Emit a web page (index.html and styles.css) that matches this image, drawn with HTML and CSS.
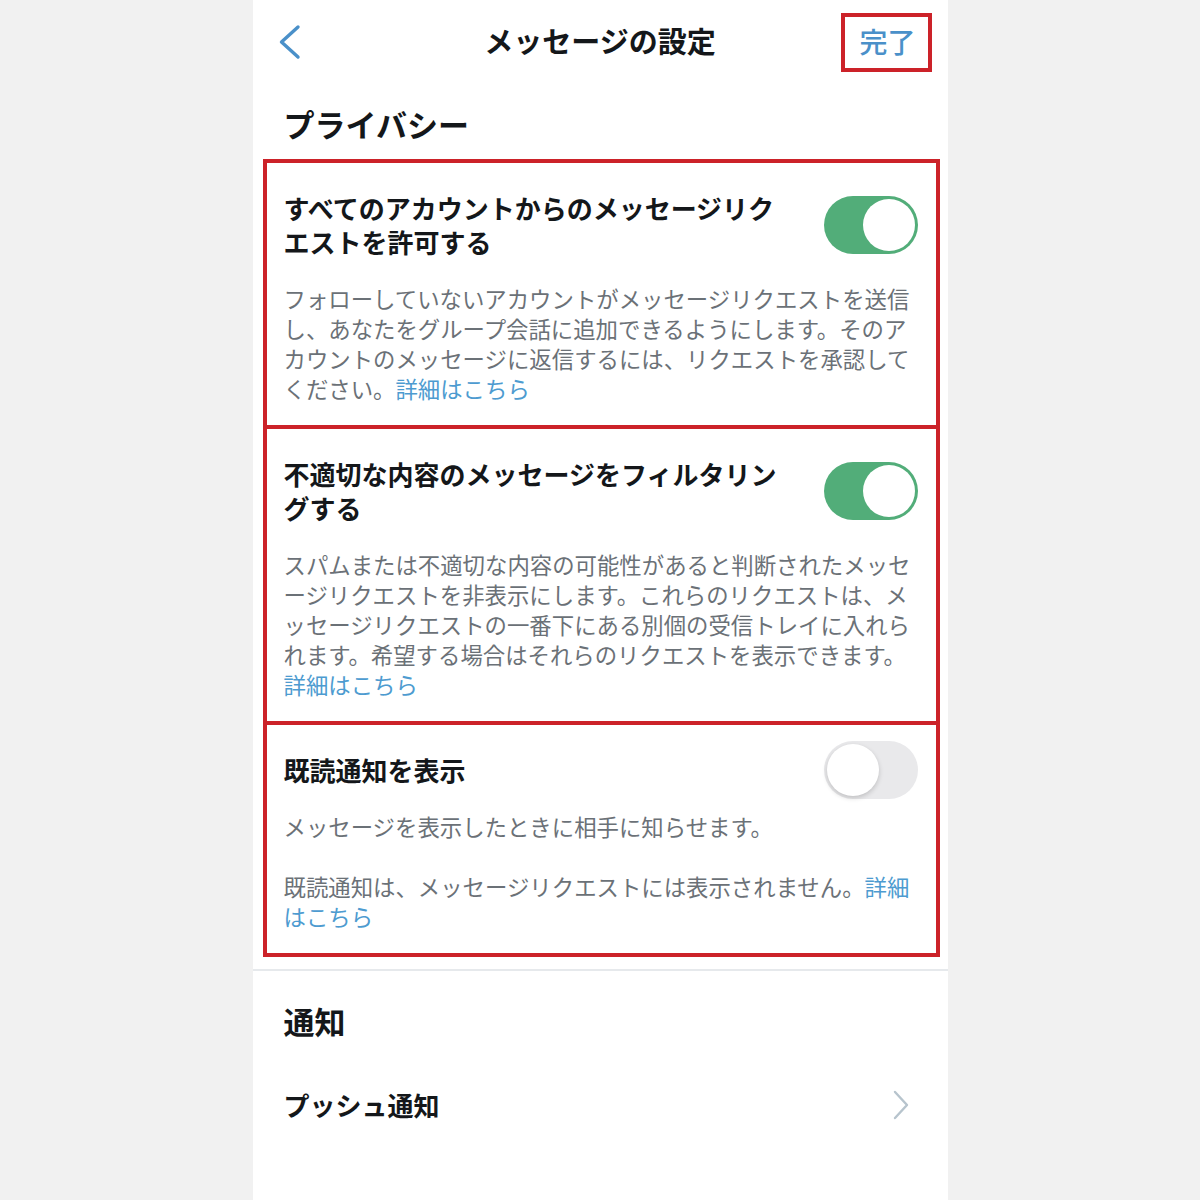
FILE: index.html
```html
<!DOCTYPE html>
<html lang="ja">
<head>
<meta charset="utf-8">
<title>メッセージの設定</title>
<link rel="stylesheet" href="styles.css">
</head>
<body>
<div class="phone">
  <header class="nav">
    <div class="nav-left">
      <svg class="back" width="24" height="36" viewBox="0 0 24 36"><path d="M20 3 L3.5 18 L20 33" fill="none" stroke="#4a90c9" stroke-width="3.4" stroke-linecap="round" stroke-linejoin="round"/></svg>
    </div>
    <h1 class="nav-title">メッセージの設定</h1>
    <div class="nav-right"><span class="done">完了</span></div>
  </header>

  <h2 class="section-heading">プライバシー</h2>

  <div class="settings">
    <section class="item">
      <div class="item-row">
        <h3 class="item-title">すべてのアカウントからのメッセージリクエストを許可する</h3>
        <span class="toggle on"><span class="knob"></span></span>
      </div>
      <p class="desc">フォローしていないアカウントがメッセージリクエストを送信し、あなたをグループ会話に追加できるようにします。そのアカウントのメッセージに返信するには、リクエストを承認してください。<a class="link">詳細はこちら</a></p>
    </section>
    <section class="item">
      <div class="item-row">
        <h3 class="item-title">不適切な内容のメッセージをフィルタリングする</h3>
        <span class="toggle on"><span class="knob"></span></span>
      </div>
      <p class="desc">スパムまたは不適切な内容の可能性があると判断されたメッセージリクエストを非表示にします。これらのリクエストは、メッセージリクエストの一番下にある別個の受信トレイに入れられます。希望する場合はそれらのリクエストを表示できます。<a class="link">詳細はこちら</a></p>
    </section>
    <section class="item">
      <div class="item-row">
        <h3 class="item-title">既読通知を表示</h3>
        <span class="toggle"><span class="knob"></span></span>
      </div>
      <p class="desc">メッセージを表示したときに相手に知らせます。</p>
      <p class="desc">既読通知は、メッセージリクエストには表示されません。<a class="link">詳細はこちら</a></p>
    </section>
  </div>

  <div class="divider"></div>

  <h2 class="section-heading notif">通知</h2>
  <div class="nav-row">
    <span>プッシュ通知</span>
    <svg width="18" height="30" viewBox="0 0 18 30"><path d="M3 2 L15 15 L3 28" fill="none" stroke="#b7c4cd" stroke-width="2.4" stroke-linecap="round" stroke-linejoin="round"/></svg>
  </div>
</div>
</body>
</html>
```

FILE: styles.css
```css
html, body {
  margin: 0;
  padding: 0;
}
body {
  background: #f1f1f1;
  font-family: "Noto Sans CJK JP", "Noto Sans", sans-serif;
  color: #14171a;
}
.phone {
  width: 695px;
  margin: 0 auto;
  background: #fff;
  min-height: 1200px;
}
.nav {
  height: 84px;
  display: grid;
  grid-template-columns: 1fr auto 1fr;
  align-items: center;
}
.nav-left {
  padding-left: 25px;
  display: flex;
  align-items: center;
}
.nav-title {
  margin: 0;
  padding-bottom: 4px;
  font-size: 29px;
  line-height: 40px;
  font-weight: 700;
  color: #14171a;
}
.nav-right {
  display: flex;
  justify-content: flex-end;
  padding-right: 16px;
}
.done {
  border: 4px solid #cc2229;
  padding: 0 12px 0 14px;
  height: 51px;
  line-height: 49px;
  font-size: 28px;
  font-weight: 500;
  color: #4a90c9;
}
.section-heading {
  margin: 0;
  padding: 20px 31px 0;
  font-size: 31px;
  line-height: 40px;
  font-weight: 700;
  color: #14171a;
}
.settings {
  margin: 15px 8px 0 10px;
  border: 4px solid #cc2229;
}
.item {
  padding: 28px 18px 22px 17px;
}
.item + .item {
  border-top: 4px solid #cc2229;
}
.item-row {
  display: flex;
  align-items: center;
  justify-content: space-between;
}
.item-title {
  margin: 0;
  max-width: 510px;
  font-size: 26px;
  line-height: 34px;
  font-weight: 700;
  color: #14171a;
  line-break: loose;
}
.toggle {
  flex: none;
  position: relative;
  width: 94px;
  height: 58px;
  margin: -12px 0;
  border-radius: 29px;
  background: #e9e9eb;
}
.toggle.on {
  background: #52ad79;
}
.knob {
  position: absolute;
  top: 3px;
  left: 3px;
  width: 52px;
  height: 52px;
  border-radius: 50%;
  background: #fff;
  box-shadow: 0 2px 5px rgba(0, 0, 0, 0.18);
}
.toggle.on .knob {
  left: 39px;
  box-shadow: none;
}
.desc {
  margin: 24px 0 0;
  width: 630px;
  font-size: 22.4px;
  line-height: 30px;
  color: #6b7177;
  line-break: loose;
}
.desc + .desc {
  margin-top: 30px;
}
.link {
  color: #4d9bd0;
  text-decoration: none;
}
.divider {
  height: 2px;
  background: #e6e9ec;
  margin-top: 12px;
}
.section-heading.notif {
  padding-top: 30px;
}
.nav-row {
  display: flex;
  justify-content: space-between;
  align-items: center;
  padding: 47px 38px 0 31px;
  font-size: 26px;
  line-height: 34px;
  font-weight: 700;
}
```
